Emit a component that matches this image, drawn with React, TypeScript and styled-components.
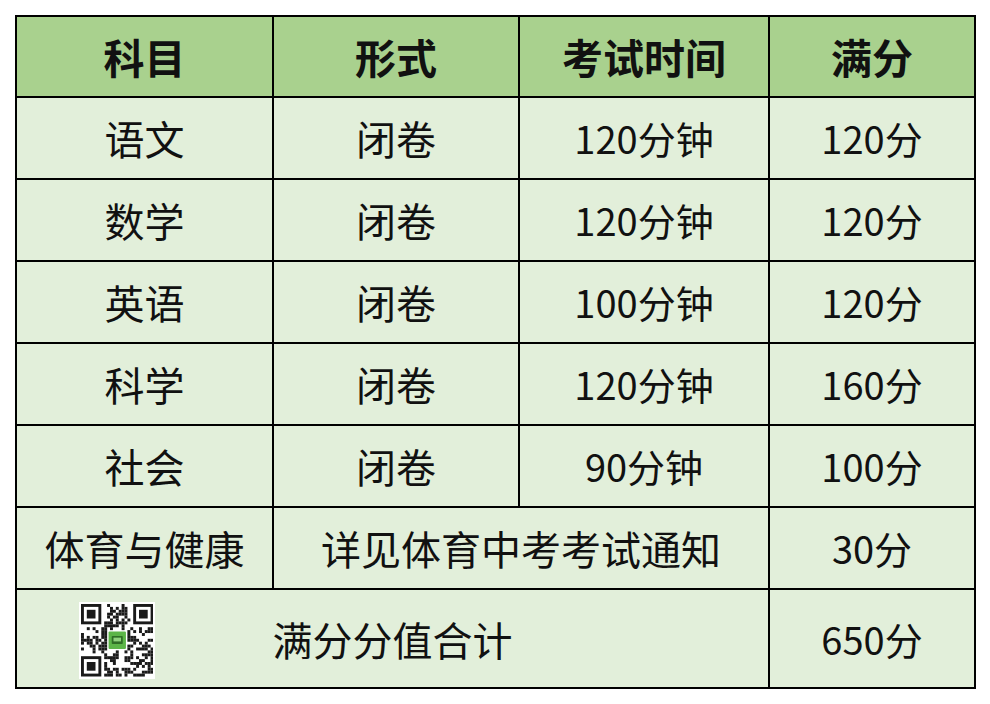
import React from "react";
import styled, { createGlobalStyle } from "styled-components";

const GlobalStyle = createGlobalStyle`
  html, body { margin: 0; padding: 0; background: #ffffff; }
  body { font-family: "Noto Sans CJK SC", "Noto Sans", sans-serif; }
`;

const Page = styled.div`
  padding: 15px;
  width: 990px;
  height: 704px;
  box-sizing: border-box;
`;

const Table = styled.table`
  border-collapse: collapse;
  width: 959px;
  table-layout: fixed;
  font-family: "Noto Sans CJK SC", "Noto Sans", sans-serif;
  color: #111;
`;

const HeadCell = styled.th`
  height: 79px;
  padding: 0;
  background: #a9d18e;
  border: 2px solid #000;
  font-size: 41px;
  font-weight: 700;
  text-align: center;
  vertical-align: middle;
  line-height: 1;
`;

const Cell = styled.td<{ $tall?: boolean; $num?: boolean }>`
  position: relative;
  height: ${(p) => (p.$tall ? "97px" : "80px")};
  padding: 0;
  background: #e2efda;
  border: 2px solid #000;
  font-size: ${(p) => (p.$num ? "38px" : "40px")};
  font-weight: 400;
  text-align: center;
  vertical-align: middle;
  line-height: 1;
`;

const QrBox = styled.div`
  position: absolute;
  left: 62px;
  top: 12px;
  width: 76px;
  height: 77px;
  background: #fff;
  display: flex;
  align-items: center;
  justify-content: center;
`;

const rows = [
  ["语文", "闭卷", "120分钟", "120分"],
  ["数学", "闭卷", "120分钟", "120分"],
  ["英语", "闭卷", "100分钟", "120分"],
  ["科学", "闭卷", "120分钟", "160分"],
  ["社会", "闭卷", "90分钟", "100分"],
];

function QrCode() {
  const n = 25;
  const m = 2.9;
  const cells: React.ReactElement[] = [];
  let seed = 12345;
  const rnd = () => {
    seed = (seed * 1103515245 + 12345) & 0x7fffffff;
    return seed / 0x7fffffff;
  };
  const inFinder = (x: number, y: number) =>
    (x < 8 && y < 8) || (x >= n - 8 && y < 8) || (x < 8 && y >= n - 8);
  const inLogo = (x: number, y: number) => x >= 9 && x <= 15 && y >= 9 && y <= 15;
  for (let y = 0; y < n; y++) {
    for (let x = 0; x < n; x++) {
      if (inFinder(x, y) || inLogo(x, y)) continue;
      if (rnd() < 0.5) {
        cells.push(<rect key={`${x}-${y}`} x={x * m} y={y * m} width={m + 0.05} height={m + 0.05} />);
      }
    }
  }
  const finder = (fx: number, fy: number) => (
    <g key={`f${fx}-${fy}`}>
      <rect x={fx * m} y={fy * m} width={7 * m} height={7 * m} />
      <rect x={(fx + 1) * m} y={(fy + 1) * m} width={5 * m} height={5 * m} fill="#fff" />
      <rect x={(fx + 2) * m} y={(fy + 2) * m} width={3 * m} height={3 * m} />
    </g>
  );
  const s = n * m;
  return (
    <svg width={s} height={s} viewBox={`0 0 ${s} ${s}`}>
      <g fill="#1a1a1a">
        {cells}
        {finder(0, 0)}
        {finder(n - 7, 0)}
        {finder(0, n - 7)}
      </g>
      <rect x={9.5 * m} y={9.5 * m} width={6 * m} height={6 * m} fill="#5cb548" rx={1} />
      <rect x={10.6 * m} y={11 * m} width={3.8 * m} height={2.8 * m} fill="#2f6e26" rx={0.8} />
      <rect x={11.2 * m} y={11.6 * m} width={2.6 * m} height={1.3 * m} fill="#8fd27d" />
    </svg>
  );
}

export default function App() {
  return (
    <>
      <GlobalStyle />
      <Page>
        <Table>
          <colgroup>
            <col style={{ width: 257 }} />
            <col style={{ width: 246 }} />
            <col style={{ width: 250 }} />
            <col style={{ width: 206 }} />
          </colgroup>
          <thead>
            <tr>
              <HeadCell>科目</HeadCell>
              <HeadCell>形式</HeadCell>
              <HeadCell>考试时间</HeadCell>
              <HeadCell>满分</HeadCell>
            </tr>
          </thead>
          <tbody>
            {rows.map((r) => (
              <tr key={r[0]}>
                <Cell>{r[0]}</Cell>
                <Cell>{r[1]}</Cell>
                <Cell $num>{r[2]}</Cell>
                <Cell $num>{r[3]}</Cell>
              </tr>
            ))}
            <tr>
              <Cell>体育与健康</Cell>
              <Cell colSpan={2}>详见体育中考考试通知</Cell>
              <Cell $num>30分</Cell>
            </tr>
            <tr>
              <Cell $tall colSpan={3}>
                <QrBox>
                  <QrCode />
                </QrBox>
                满分分值合计
              </Cell>
              <Cell $tall $num>650分</Cell>
            </tr>
          </tbody>
        </Table>
      </Page>
    </>
  );
}
